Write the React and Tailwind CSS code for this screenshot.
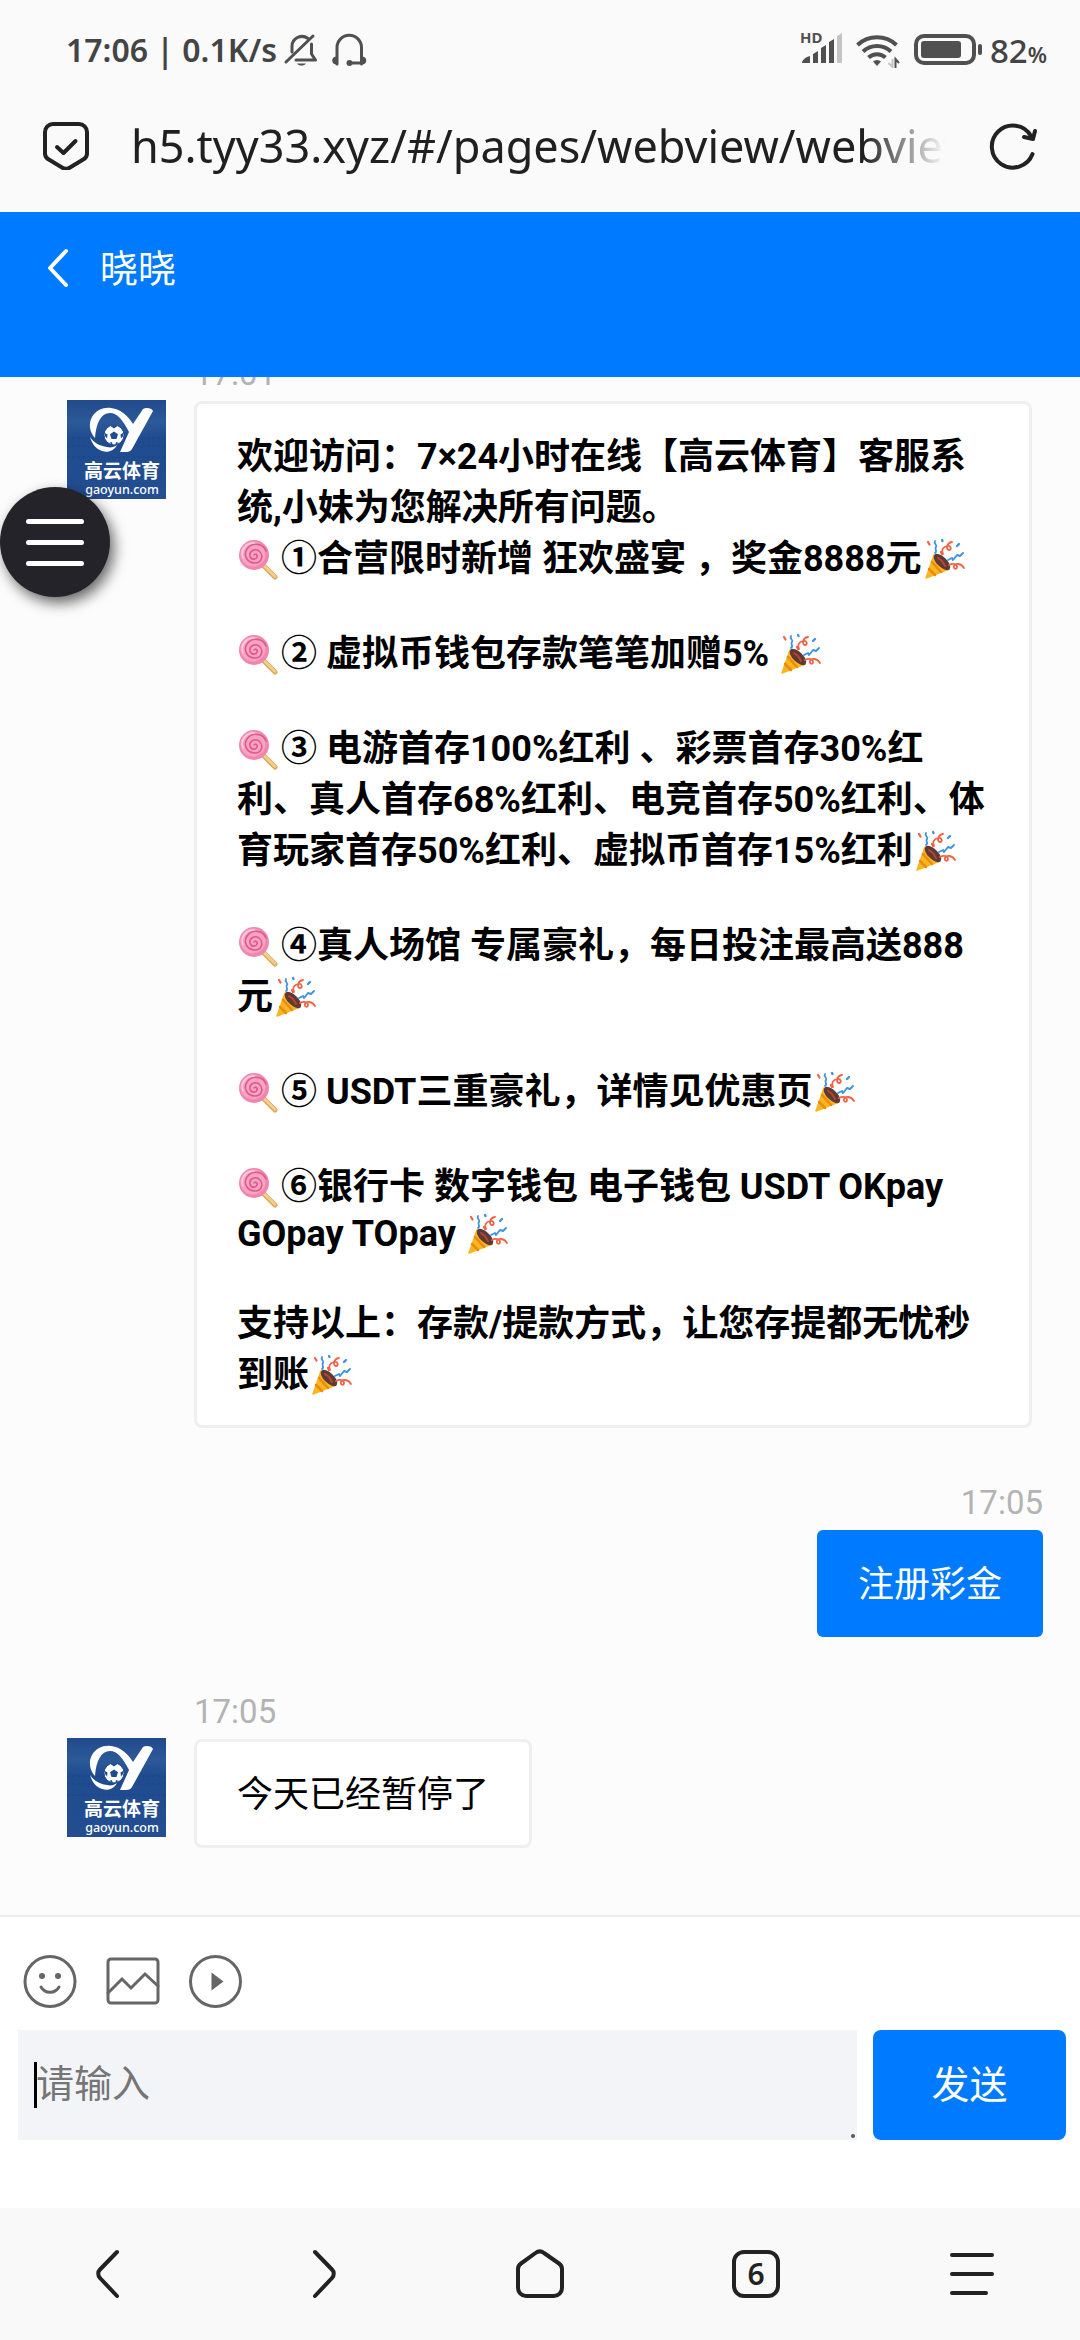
function StatusBar() {
  return (
    <div className="flex h-[100px] items-center justify-between pl-[66px] pr-[33px] font-['Noto_Sans',sans-serif] text-[#444]">
      <div className="flex items-center">
        <span className="text-[32px] font-semibold leading-none">17:06 | 0.1K/s</span>
        <svg className="ml-1.5 h-9 w-9" viewBox="0 0 36 36" fill="none" stroke="#505050" strokeWidth="3" strokeLinecap="round" strokeLinejoin="round">
          <path d="M9 20v-6a10 10 0 0 1 16-7.500M28.500 12v10l4 6H13" />
          <path d="M30 4 3 30" />
          <path d="M14 31.500h9c-2 2.800-7 2.800-9 0Z" fill="#505050" stroke="none" />
        </svg>
        <svg className="ml-3 h-9 w-9" viewBox="0 0 36 36" fill="none" stroke="#505050" strokeWidth="3" strokeLinecap="round">
          <path d="M6 32V15.500a12 12 0 0 1 24.500 0V32M18 31h13" />
          <path d="M6 24.500v8c-3 0-4.800-1.500-4.800-4s1.800-4 4.800-4ZM30.500 24.500v8c3 0 4.800-1.500 4.800-4s-1.800-4-4.800-4Z" fill="#505050" stroke="none" />
          <circle cx="18.500" cy="31" r="3" fill="#505050" stroke="none" />
        </svg>
      </div>
      <div className="flex items-center">
        <svg className="h-[46px] w-[42px]" viewBox="0 -5 42 46" fill="#505050">
          <text x="0" y="11" fontFamily="Noto Sans, sans-serif" fontSize="15" fontWeight="700">HD</text>
          <path d="M2 31c0-3 4-6 8-7v7ZM13 22l5-3v12h-5ZM21 16l5-3v18h-5ZM29 10l5-3v24h-5Z" />
          <path d="M37 4l5-3v30h-5Z" fill="#c4c4c4" />
        </svg>
        <svg className="ml-3.5 h-9 w-11" viewBox="0 0 44 36" fill="none" stroke="#505050" strokeWidth="4">
          <path d="M1.500 13a28.500 28.500 0 0 1 39 0M7 19.500a20.500 20.500 0 0 1 28 0M12.500 25.500a12.500 12.500 0 0 1 17 0" />
          <path d="M17 29.500a6 6 0 0 1 8 0L21 34Z" fill="#505050" stroke="none" />
          <path d="M36.500 27v8l-4-4" stroke="#c4c4c4" strokeWidth="2" />
          <path d="M39.500 36v-9l3.500 4" strokeWidth="2" />
        </svg>
        <svg className="ml-3.5 h-8 w-[70px]" viewBox="0 0 70 32" fill="none">
          <rect x="2" y="2" width="58" height="27" rx="8" stroke="#505050" strokeWidth="4" />
          <rect x="7" y="7" width="40" height="17" rx="3" fill="#505050" />
          <rect x="64" y="10" width="4" height="11" rx="2" fill="#505050" />
        </svg>
        <span className="ml-1.5 flex items-baseline font-medium leading-none">
          <span className="text-[33px]">82</span>
          <span className="text-[22px] font-semibold">%</span>
        </span>
      </div>
    </div>
  );
}

function AddressBar() {
  return (
    <div className="flex h-28 items-center px-[43px] pb-5">
      <button aria-label="安全" className="shrink-0">
        <svg className="h-12 w-[46px]" viewBox="0 0 46 48" fill="none" stroke="#222" strokeWidth="4" strokeLinecap="round" strokeLinejoin="round">
          <path d="M10 2h26a8 8 0 0 1 8 8v22a7 7 0 0 1-3 5L27 45.500a8 8 0 0 1-8 0L5 37a7 7 0 0 1-3-5V10a8 8 0 0 1 8-8Z" />
          <path d="m14 25 6.500 6L32.500 19" />
        </svg>
      </button>
      <input
        aria-label="网址"
        readOnly
        value="h5.tyy33.xyz/#/pages/webview/webview"
        className="ml-[42px] mr-11 h-[64px] min-w-0 flex-1 bg-transparent [mask-image:linear-gradient(to_right,black_90%,transparent)] font-['Noto_Sans',sans-serif] text-[45px] text-[#202020] outline-none"
      />
      <button aria-label="刷新" className="shrink-0">
        <svg className="h-12 w-12" viewBox="0 0 48 48" fill="none" stroke="#222" strokeWidth="4" strokeLinecap="round" strokeLinejoin="round">
          <path d="M43.500 32A21 21 0 1 1 42 14" />
          <path d="m46 9-2 8-9-2" />
        </svg>
      </button>
    </div>
  );
}

function Avatar() {
  return (
    <svg role="img" aria-label="高云体育" className="mt-[46px] h-[99px] w-[99px] shrink-0" viewBox="0 0 99 99">
      <defs>
        <linearGradient id="sky" x1="0" y1="0" x2="0" y2="1">
          <stop offset="0" stopColor="#204a8c" />
          <stop offset="0.22" stopColor="#2c5998" />
          <stop offset="0.4" stopColor="#1f4b8f" />
          <stop offset="1" stopColor="#234e91" />
        </linearGradient>
      </defs>
      <rect width="99" height="99" fill="url(#sky)" />
      <path d="M0 38h99M0 46h99M0 57h99" stroke="#1b4383" strokeWidth="1" strokeDasharray="3 2" opacity="0.7" />
      <path d="M76 9c3-2 9-1 10 2L65 49c-1 2-3 3-6 3h-6l9-20C56 20 50 13 43 13c-9 0-14 10-15 25-5-5-7-14-3-21C29 10 37 7 44 8c10 1 17 8 22 16Z" fill="#fff" />
      <path d="M23 37c4 6 10 9 17 10 4 1 7 0 10-2-3 6-9 8-15 6-6-2-10-7-12-14Z" fill="#fff" />
      <circle cx="47" cy="35" r="10" fill="#fff" stroke="#1f4b8f" strokeWidth="1" />
      <path d="m47 31.500 4 2.800-1.500 4.700h-5L43 34.300ZM43.500 26l3.500-1 3.500 1-3.500 2.500ZM38 33l2.500 1.500-.5 4-2-2.500ZM56 33l-2.500 1.500.5 4 2-2.500ZM42 43l3-1 .5 2.500ZM52 43l-3-1-.5 2.500Z" fill="#1f4b8f" />
      <text x="55" y="78" textAnchor="middle" fill="#fff" fontFamily="Noto Sans CJK SC, sans-serif" fontSize="19" fontWeight="700">高云体育</text>
      <text x="55" y="94" textAnchor="middle" fill="#fff" fontFamily="Noto Sans, sans-serif" fontSize="12.500" fontWeight="500">gaoyun.com</text>
    </svg>
  );
}

function Lollipop() {
  return (
    <svg role="img" aria-label="🍭" className="mr-0.5 inline-block h-[42px] w-[42px] align-[-9px]" viewBox="0 0 42 42" fill="none">
      <path d="m27 28 11 11" stroke="#dda95c" strokeWidth="5" strokeLinecap="round" />
      <path d="m27 27.500 11 11" stroke="#f3cf8f" strokeWidth="2.500" strokeLinecap="round" />
      <circle cx="17" cy="17" r="15" fill="#f285ae" />
      <circle cx="16" cy="16" r="12.500" fill="#f9a3c3" />
      <path d="M17 17c1-2 4 0 3 2-1 3-6 3-7-1-1-5 5-8 9-5 5 4 3 12-4 12-8 0-12-8-8-14 5-7 16-6 19 2" stroke="#dc5a8d" strokeWidth="1.600" strokeLinecap="round" />
      <path d="M6 20C3 12 9 5 17 5" stroke="#fcd0e0" strokeWidth="1.500" strokeLinecap="round" />
    </svg>
  );
}

function Popper() {
  return (
    <svg role="img" aria-label="🎉" className="ml-0.5 inline-block h-[42px] w-[42px] align-[-9px]" viewBox="0 0 42 42" fill="none" strokeLinecap="round" strokeLinejoin="round">
      <path d="M10 17 2 40l23-9Z" fill="#fbb521" stroke="#fbb521" strokeWidth="1.500" />
      <path d="m8 24 9 10M5 31l6 6" stroke="#e88d0c" strokeWidth="2.500" />
      <ellipse cx="18" cy="24" rx="5" ry="10.500" transform="rotate(-46 18 24)" fill="#5d3a34" />
      <path d="m14 20 4 3 3 5" stroke="#b8452f" strokeWidth="2" />
      <path d="M11 15c3-2-1-4 1-6s-3-3-1-6" stroke="#3f93dc" strokeWidth="1.800" />
      <path d="M19 16c-2-4 0-7 4-8s5 4 2 4-3-7 3-8" stroke="#ef6245" strokeWidth="1.800" />
      <path d="m24 22 4-2 1 2 4-5 3 1 3-3" stroke="#3f93dc" strokeWidth="1.900" />
      <path d="M25 27c4-2 8-1 8 2s-4 2-3-1 7-3 10 2" stroke="#ef6245" strokeWidth="1.800" />
      <path d="m4 4 1.500 2.500M17 14l1 2" stroke="#ef6245" strokeWidth="2.200" />
      <path d="m18 2 .5 1M33 8l2-2" stroke="#3f93dc" strokeWidth="2.400" />
    </svg>
  );
}

function Time({ children }) {
  return <time className="mb-2 block font-[Roboto,sans-serif] text-[33px] leading-[39px] text-[#b3b3b3]">{children}</time>;
}

function Incoming({ time, children }) {
  return (
    <div className="flex shrink-0 gap-7 pl-[67px] pr-12">
      <Avatar />
      <div className="min-w-0">
        <Time>{time}</Time>
        <div className="w-fit rounded-lg border-[3px] border-[#efefef] bg-white px-10 pb-6 pt-7 text-[36px] leading-[51px] text-black">
          {children}
        </div>
      </div>
    </div>
  );
}

const tool = { fill: "none", stroke: "#666", strokeWidth: 3, strokeLinejoin: "round", strokeLinecap: "round" };
const nav = { fill: "none", stroke: "#222", strokeWidth: 4, strokeLinejoin: "round", strokeLinecap: "round" };

export default function App() {
  return (
    <div className="relative flex h-screen flex-col bg-[#fafafa] font-[Roboto,'Noto_Sans_CJK_SC',sans-serif]">
      <StatusBar />
      <AddressBar />

      <header className="flex h-[165px] shrink-0 items-start bg-[#007aff] pl-12 pt-[27px] text-white">
        <button aria-label="返回" className="mt-2">
          <svg className="h-[42px] w-[22px]" viewBox="0 0 22 42" fill="none" stroke="currentColor" strokeWidth="4" strokeLinecap="round" strokeLinejoin="round">
            <path d="M18 4 2 21l16 17" />
          </svg>
        </button>
        <h1 className="ml-[30px] text-[38px] leading-[60px]">晓晓</h1>
      </header>

      <main className="flex min-h-0 flex-1 flex-col justify-end gap-[55px] overflow-hidden bg-[#fcfcfc] pb-[67px]">
        <Incoming time="17:01">
          <div className="flex flex-col gap-11 font-bold">
            <p>
              欢迎访问：7×24小时在线【高云体育】客服系统,小妹为您解决所有问题。
              <br />
              <Lollipop />①合营限时新增 狂欢盛宴 ，奖金8888元<Popper />
            </p>
            <p><Lollipop />② 虚拟币钱包存款笔笔加赠5% <Popper /></p>
            <p><Lollipop />③ 电游首存100%红利 、彩票首存30%红利、真人首存68%红利、电竞首存50%红利、体育玩家首存50%红利、虚拟币首存15%红利<Popper /></p>
            <p><Lollipop />④真人场馆 专属豪礼，每日投注最高送888元<Popper /></p>
            <p><Lollipop />⑤ USDT三重豪礼，详情见优惠页<Popper /></p>
            <p>
              <Lollipop />⑥银行卡 数字钱包 电子钱包 USDT OKpay
              <span className="block leading-[42px]">GOpay TOpay <Popper /></span>
            </p>
            <p>支持以上：存款/提款方式，让您存提都无忧秒到账<Popper /></p>
          </div>
        </Incoming>

        <div className="flex shrink-0 flex-col items-end pr-[37px]">
          <Time>17:05</Time>
          <div className="rounded-md bg-[#007aff] px-[41px] pb-[26px] pt-[30px] text-[36px] leading-[51px] text-white">注册彩金</div>
        </div>

        <Incoming time="17:05">今天已经暂停了</Incoming>
      </main>

      <form className="shrink-0 border-t-2 border-[#ededed] bg-white pb-[68px] pl-[18px] pr-3.5 pt-[37px]">
        <div className="flex gap-7 pl-1">
          <button type="button" aria-label="表情">
            <svg className="h-[55px] w-[55px]" viewBox="0 0 55 55" {...tool}>
              <circle cx="28" cy="27.500" r="25" />
              <path d="M19 33c4 7 14 7 18 0" />
              <circle cx="20" cy="22" r="3" fill="#666" stroke="none" />
              <circle cx="36" cy="22" r="3" fill="#666" stroke="none" />
            </svg>
          </button>
          <button type="button" aria-label="图片">
            <svg className="h-[55px] w-[55px]" viewBox="0 0 55 55" {...tool}>
              <rect x="3" y="5" width="50" height="44" rx="3" />
              <path d="m3 39 14-14 9 9 14-14 13 12" strokeLinejoin="miter" />
            </svg>
          </button>
          <button type="button" aria-label="视频">
            <svg className="h-[55px] w-[55px]" viewBox="0 0 55 55" {...tool}>
              <circle cx="27.500" cy="27.500" r="25" />
              <path d="M23.500 18.500v18l12-9Z" fill="#666" stroke="none" />
            </svg>
          </button>
        </div>
        <div className="mt-[21px] flex gap-4">
          <div className="relative min-w-0 flex-1">
            <textarea
              aria-label="消息"
              placeholder="请输入"
              className="block h-[110px] w-full resize-none bg-[#f3f4f8] px-[18px] py-[27px] text-[38px] leading-[55px] outline-none placeholder:text-[#757575]"
            />
            <span className="absolute left-4 top-8 h-[46px] w-[3px] bg-black" />
            <span className="absolute bottom-0.5 right-0.5 h-1 w-1 rounded-full bg-[#555]" />
          </div>
          <button type="button" className="w-[193px] rounded-lg bg-[#007aff] text-[38px] text-white">发送</button>
        </div>
      </form>

      <nav className="grid h-[132px] shrink-0 grid-cols-5 place-items-center bg-[#f9f9f9]">
        <button aria-label="后退">
          <svg className="h-[52px] w-[52px]" viewBox="0 0 52 52" {...nav}><path d="M35 4 18 21.500a6 6 0 0 0 0 8.500L35 48" /></svg>
        </button>
        <button aria-label="前进">
          <svg className="h-[52px] w-[52px]" viewBox="0 0 52 52" {...nav}><path d="m17 4 17 17.500a6 6 0 0 1 0 8.500L17 48" /></svg>
        </button>
        <button aria-label="主页">
          <svg className="h-[52px] w-[52px]" viewBox="0 0 52 52" {...nav}>
            <path d="M4 21.500a7 7 0 0 1 3-6L21.500 5a7 7 0 0 1 8.500 0L45 15.500a7 7 0 0 1 3 6V40a8 8 0 0 1-8 8H12a8 8 0 0 1-8-8Z" />
          </svg>
        </button>
        <button aria-label="标签页" className="flex h-12 w-12 items-center justify-center rounded-xl border-4 border-[#222] font-['Noto_Sans',sans-serif] text-[30px] font-semibold leading-none text-[#222]">
          6
        </button>
        <button aria-label="菜单">
          <svg className="h-[52px] w-[52px]" viewBox="0 0 52 52" {...nav}><path d="M6 7h40M6 26h40M6 45h34" /></svg>
        </button>
      </nav>

      <button aria-label="展开菜单" className="absolute left-0 top-[487px] flex h-[110px] w-[110px] flex-col items-center justify-center gap-4 rounded-full bg-[#232329] shadow-[4px_6px_14px_rgba(0,0,0,0.6)]">
        <span className="h-[5px] w-[58px] rounded-full bg-white" />
        <span className="h-[5px] w-[58px] rounded-full bg-white" />
        <span className="h-[5px] w-[58px] rounded-full bg-white" />
      </button>
    </div>
  );
}
